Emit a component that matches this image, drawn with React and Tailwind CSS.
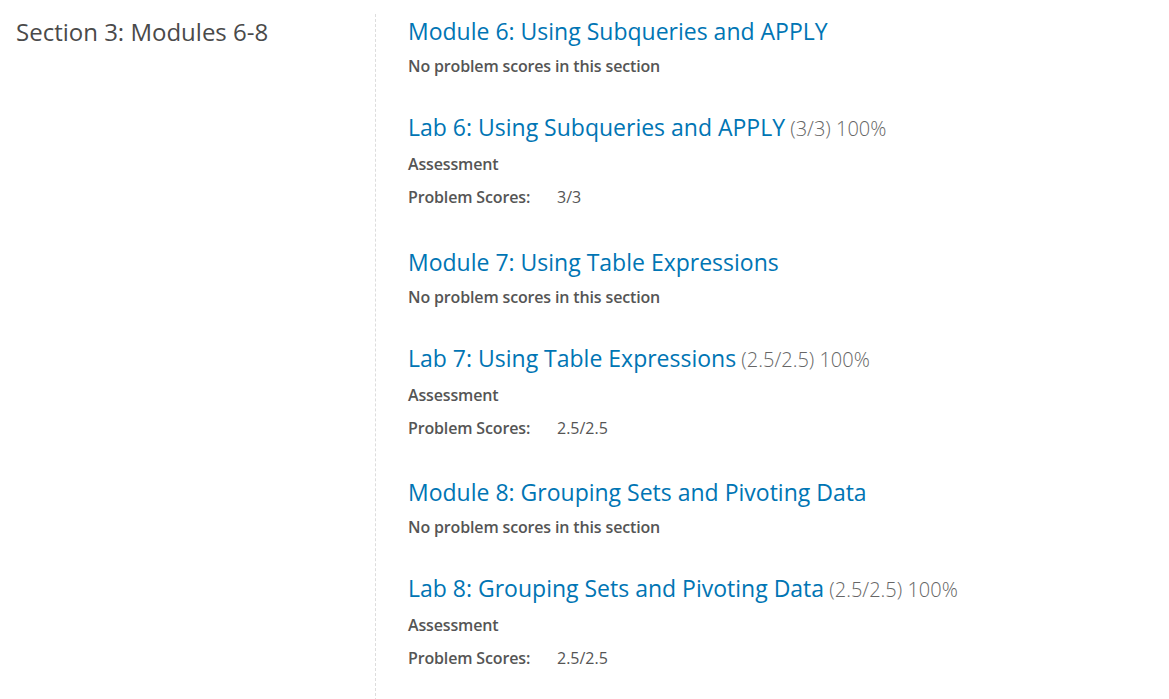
import React from 'react';

const sections = [
  { title: 'Module 6: Using Subqueries and APPLY' },
  { title: 'Lab 6: Using Subqueries and APPLY', score: '(3/3) 100%', kind: 'Assessment', problems: '3/3' },
  { title: 'Module 7: Using Table Expressions' },
  { title: 'Lab 7: Using Table Expressions', score: '(2.5/2.5) 100%', kind: 'Assessment', problems: '2.5/2.5' },
  { title: 'Module 8: Grouping Sets and Pivoting Data' },
  { title: 'Lab 8: Grouping Sets and Pivoting Data', score: '(2.5/2.5) 100%', kind: 'Assessment', problems: '2.5/2.5' },
];

const Subsection = ({ item }) => (
  <div className={item.score ? 'mb-[35.5px]' : 'mb-[32px]'}>
    <h3 className="text-[23px] leading-[34px] text-[#0075b4]">
      {item.title}
      {item.score && (
        <span className="text-[20px] font-light text-[#666]"> {item.score}</span>
      )}
    </h3>
    {item.score ? (
      <>
        <p className="mt-[6px] text-[16px] leading-[24px] font-semibold tracking-[-0.15px] text-[#555]">{item.kind}</p>
        <dl className="mt-[9px] flex text-[16px] leading-[24px] text-[#555]">
          <dt className="font-semibold tracking-[-0.15px] w-[149px]">Problem Scores:</dt>
          <dd>{item.problems}</dd>
        </dl>
      </>
    ) : (
      <p className="mt-[6px] text-[16px] leading-[24px] font-semibold tracking-[-0.15px] text-[#555]">
        No problem scores in this section
      </p>
    )}
  </div>
);

const App = () => {
  return (
    <div className="min-h-screen bg-white flex" style={{ fontFamily: '"Open Sans", sans-serif' }}>
      <div className="w-[375px] shrink-0 pl-[16px] pt-[14px]">
        <h2 className="text-[24px] leading-[36px] text-[#4a4a4a]">Section 3: Modules 6-8</h2>
      </div>
      <div className="flex-1 border-l border-dashed border-[#ddd] mt-[14px] pl-[32px]">
        {sections.map((item) => (
          <Subsection key={item.title} item={item} />
        ))}
      </div>
    </div>
  );
};

export default App;
